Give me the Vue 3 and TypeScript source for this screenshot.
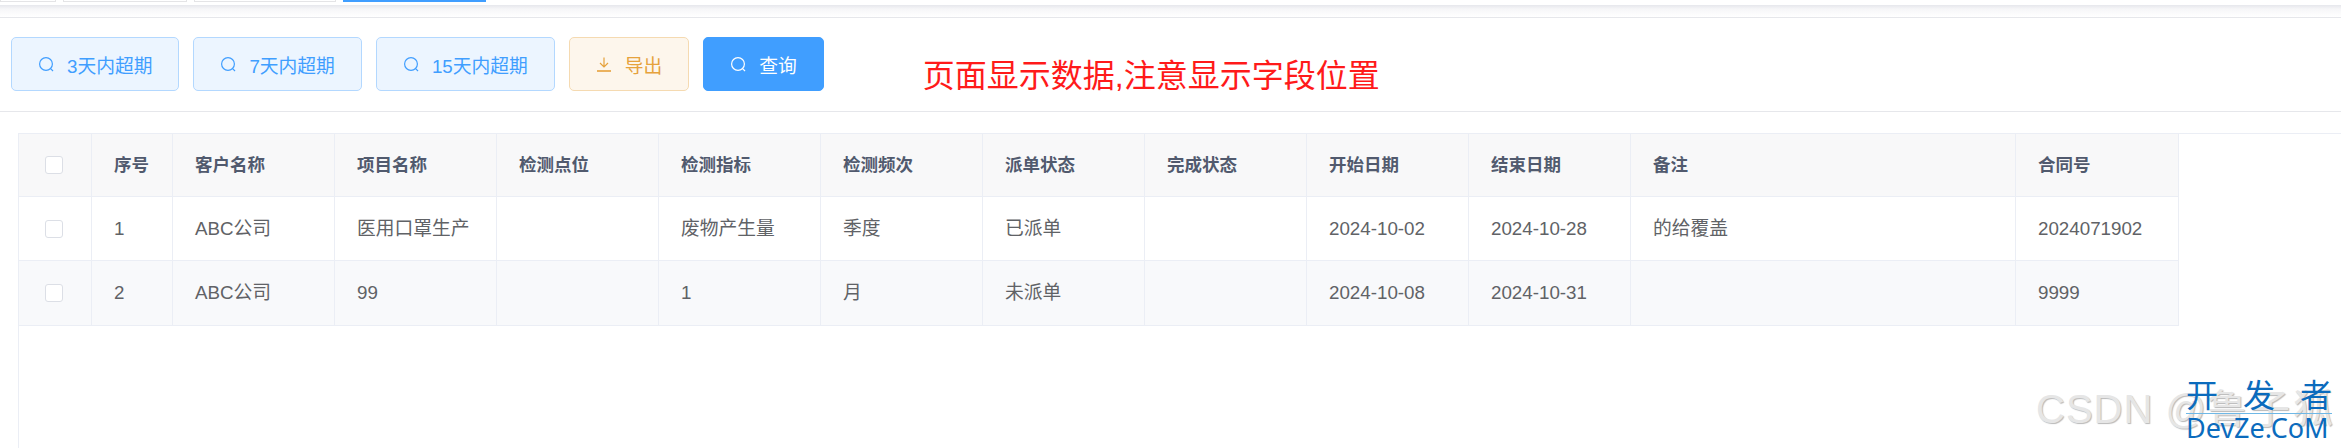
<script setup lang="ts">
interface Row {
  seq: number
  customer: string
  project: string
  point: string
  indicator: string
  frequency: string
  dispatch: string
  finish: string
  start: string
  end: string
  remark: string
  contract: string
}

const quickButtons = ['3天内超期', '7天内超期', '15天内超期']

const tabs = [
  { width: 56, active: false },
  { width: 124, active: false },
  { width: 142, active: false },
  { width: 143, active: true }
]

const columns = [
  { key: 'seq', label: '序号', width: 81 },
  { key: 'customer', label: '客户名称', width: 162 },
  { key: 'project', label: '项目名称', width: 162 },
  { key: 'point', label: '检测点位', width: 162 },
  { key: 'indicator', label: '检测指标', width: 162 },
  { key: 'frequency', label: '检测频次', width: 162 },
  { key: 'dispatch', label: '派单状态', width: 162 },
  { key: 'finish', label: '完成状态', width: 162 },
  { key: 'start', label: '开始日期', width: 162 },
  { key: 'end', label: '结束日期', width: 162 },
  { key: 'remark', label: '备注', width: 385 },
  { key: 'contract', label: '合同号', width: 163 }
] as const

const rows: Row[] = [
  {
    seq: 1,
    customer: 'ABC公司',
    project: '医用口罩生产',
    point: '',
    indicator: '废物产生量',
    frequency: '季度',
    dispatch: '已派单',
    finish: '',
    start: '2024-10-02',
    end: '2024-10-28',
    remark: '的给覆盖',
    contract: '2024071902'
  },
  {
    seq: 2,
    customer: 'ABC公司',
    project: '99',
    point: '',
    indicator: '1',
    frequency: '月',
    dispatch: '未派单',
    finish: '',
    start: '2024-10-08',
    end: '2024-10-31',
    remark: '',
    contract: '9999'
  }
]
</script>

<template>
  <div class="page">
    <div class="tabs">
      <span
        v-for="(tab, i) in tabs"
        :key="i"
        class="tab"
        :class="{ 'tab--active': tab.active }"
        :style="{ width: tab.width + 'px' }"
      />
    </div>

    <div class="toolbar">
      <button v-for="label in quickButtons" :key="label" type="button" class="btn btn--plain">
        <svg class="icon" viewBox="0 0 16 16" fill="none" stroke="currentColor" stroke-width="1.2">
          <circle cx="8" cy="8" r="6.4" />
          <path d="M12.6 12.6 L15 15" />
        </svg>
        {{ label }}
      </button>
      <button type="button" class="btn btn--warn">
        <svg class="icon" viewBox="0 0 16 16" fill="none" stroke="currentColor" stroke-width="1.2">
          <path d="M8 1.5 V10.5 M4 7 L8 11 L12 7" />
          <path d="M1 15 H15" stroke-width="1.6" />
        </svg>
        导出
      </button>
      <button type="button" class="btn btn--primary">
        <svg class="icon" viewBox="0 0 16 16" fill="none" stroke="currentColor" stroke-width="1.2">
          <circle cx="8" cy="8" r="6.4" />
          <path d="M12.6 12.6 L15 15" />
        </svg>
        查询
      </button>
      <span class="notice">页面显示数据,注意显示字段位置</span>
    </div>

    <div class="table-wrap">
      <table class="grid">
        <colgroup>
          <col class="col-check" />
          <col v-for="col in columns" :key="col.key" :style="{ width: col.width + 'px' }" />
        </colgroup>
        <thead>
          <tr>
            <th class="check-cell"><span class="checkbox" /></th>
            <th v-for="col in columns" :key="col.key">{{ col.label }}</th>
          </tr>
        </thead>
        <tbody>
          <tr v-for="row in rows" :key="row.seq">
            <td class="check-cell"><span class="checkbox" /></td>
            <td v-for="col in columns" :key="col.key">{{ row[col.key] }}</td>
          </tr>
        </tbody>
      </table>
    </div>

    <div class="mark">CSDN @<span class="mark-name">鲁子狐</span></div>
    <div class="stamp">
      <div class="stamp-cn"><span>开</span><span>发</span><span>者</span></div>
      <div class="stamp-en">DevZe.CoM</div>
    </div>
  </div>
</template>

<style>
html,
body {
  margin: 0;
  background: #fff;
  overflow: hidden;
}
</style>

<style scoped>
.page {
  position: relative;
  width: 2341px;
  height: 448px;
  overflow: hidden;
  display: flex;
  flex-direction: column;
  background: #fff;
  font-family: 'Liberation Sans', 'Noto Sans CJK SC', sans-serif;
  color: #606266;
}

.tabs {
  display: flex;
  gap: 7px;
  height: 5px;
  box-sizing: border-box;
}
.tab {
  height: 2px;
  box-sizing: border-box;
  background: #fff;
  border: 1px solid #e4e4e6;
  border-top: none;
}
.tab--active {
  background: #409eff;
  border: none;
}

.toolbar {
  display: flex;
  align-items: flex-start;
  gap: 14px;
  height: 107px;
  box-sizing: border-box;
  padding: 32px 0 0 11px;
  background: linear-gradient(#e6e7ec 0, #f6f6f8 4px, #fff 12px) top / 100% 12px no-repeat, #fff;
  border-bottom: 1px solid #e6e7eb;
  position: relative;
}
.toolbar::before {
  content: '';
  position: absolute;
  left: 0;
  right: 0;
  top: 12px;
  height: 1px;
  background: #e6e7eb;
}

.btn {
  display: inline-flex;
  align-items: center;
  justify-content: center;
  gap: 13px;
  height: 54px;
  padding: 0 26px;
  box-sizing: border-box;
  border-radius: 5px;
  border: 1px solid;
  font-family: inherit;
  font-size: 18.75px;
  white-space: nowrap;
}
.btn--plain {
  background: #ecf5ff;
  border-color: #b3d8ff;
  color: #409eff;
}
.btn--warn {
  background: #fdf6ec;
  border-color: #f5dab1;
  color: #e6a23c;
}
.btn--primary {
  background: #409eff;
  border-color: #409eff;
  color: #fff;
}
.icon {
  width: 16px;
  height: 16px;
  flex: none;
}

.notice {
  margin: 19px 0 0 85px;
  font-size: 32px;
  line-height: 40px;
  color: #ff1a1a;
  white-space: nowrap;
}

.table-wrap {
  flex: 1;
  margin: 21px 0 0 18px;
  border-top: 1px solid #ebeef5;
  border-left: 1px solid #ebeef5;
}
.grid {
  width: 2160px;
  table-layout: fixed;
  border-collapse: separate;
  border-spacing: 0;
  font-size: 18.75px;
  line-height: 26px;
}
.col-check {
  width: 73px;
}
.grid th,
.grid td {
  box-sizing: border-box;
  padding: 0 22px;
  text-align: left;
  white-space: nowrap;
  border-right: 1px solid #ebeef5;
  border-bottom: 1px solid #ebeef5;
}
.grid th {
  height: 63px;
  background: #f8f8f9;
  color: #515a6e;
  font-size: 17.5px;
  font-weight: 700;
}
.grid td {
  height: 64px;
  background: #fff;
}
.grid tbody tr:nth-child(2) td {
  height: 65px;
  background: #f8f9fb;
}
.grid .check-cell {
  padding: 0 0 0 26px;
}
.checkbox {
  display: block;
  width: 18px;
  height: 18px;
  box-sizing: border-box;
  background: #fff;
  border: 1px solid #dcdfe6;
  border-radius: 3px;
}

.mark {
  position: absolute;
  left: 2036px;
  top: 386px;
  font-size: 40px;
  line-height: 46px;
  letter-spacing: 1px;
  color: #e6e6e6;
  text-shadow: 1px 1px 1px #b9b9b9;
  white-space: nowrap;
}
.mark-name {
  letter-spacing: 3px;
}
.stamp {
  position: absolute;
  left: 2186px;
  top: 380px;
  width: 146px;
  color: #0b6bbd;
}
.stamp-cn {
  display: flex;
  justify-content: space-between;
  font-size: 32px;
  line-height: 33px;
  border-bottom: 1px solid #6fb8e6;
}
.stamp-en {
  font-family: 'Noto Sans', sans-serif;
  font-size: 27px;
  line-height: 27px;
  white-space: nowrap;
}
</style>
